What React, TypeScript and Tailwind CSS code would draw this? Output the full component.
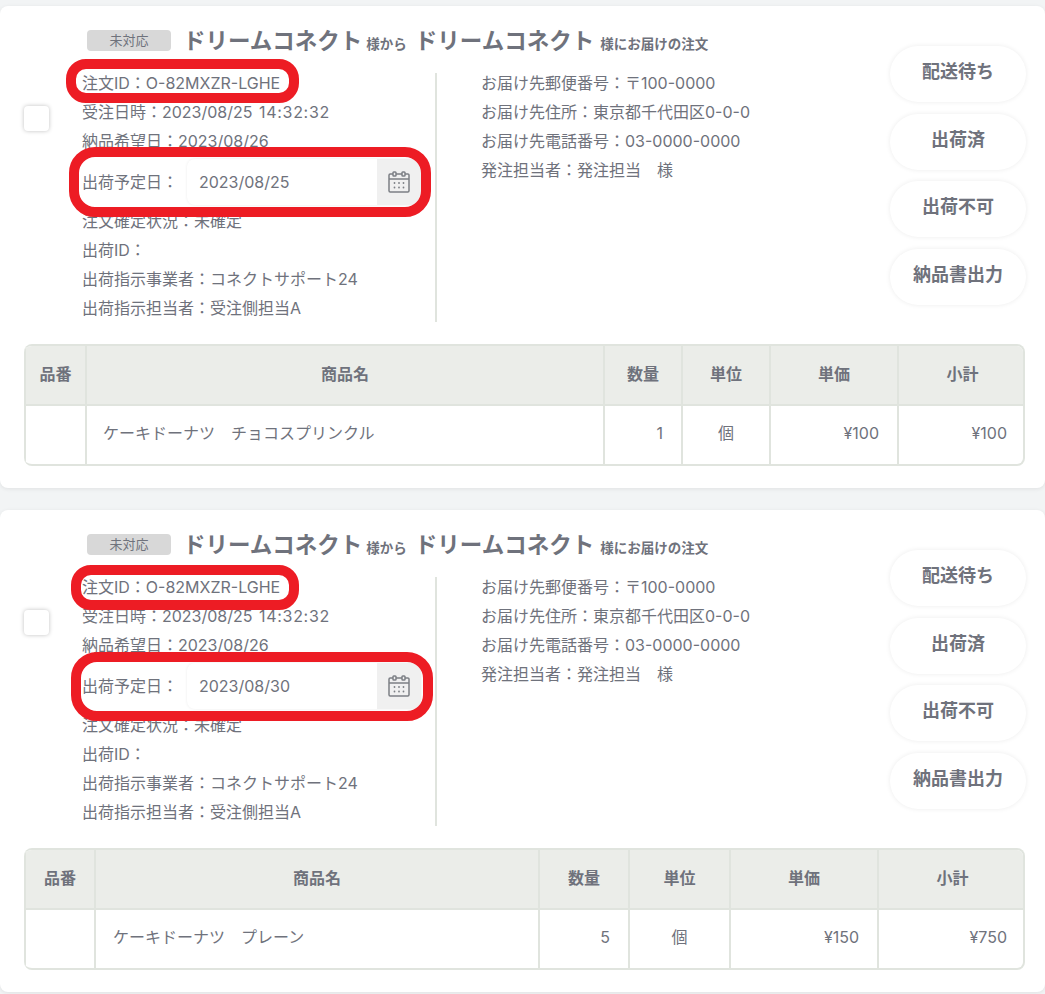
import type { ReactNode } from 'react'

const ink = 'text-[#6f727c]'

function CalendarIcon() {
  return (
    <svg width="24" height="24" viewBox="0 0 24 24" fill="none" stroke="#7c7f85" strokeWidth="1.5">
      <path d="M6 4H3.2C2.5 4 2 4.5 2 5.2v15.6c0 .7.5 1.2 1.2 1.2h17.6c.7 0 1.2-.5 1.2-1.2V5.200c0-.7-.5-1.200-1.200-1.200H18" />
      <path d="M9 4h6" />
      <path d="M2 9h20" />
      <rect x="6" y="2" width="3" height="4" rx="0.8" />
      <rect x="15" y="2" width="3" height="4" rx="0.8" />
      <g fill="#7c7f85" stroke="none">
        <circle cx="7.500" cy="13" r="0.900" />
        <circle cx="12" cy="13" r="0.900" />
        <circle cx="16.500" cy="13" r="0.900" />
        <circle cx="7.500" cy="17.500" r="0.900" />
        <circle cx="12" cy="17.500" r="0.900" />
        <circle cx="16.500" cy="17.500" r="0.900" />
      </g>
    </svg>
  )
}

function Row({ children }: { children: ReactNode }) {
  return <div className="h-[29px] whitespace-nowrap leading-[29px]">{children}</div>
}

const actions = ['配送待ち', '出荷済', '出荷不可', '納品書出力']

interface Order {
  date: string
  product: string
  qty: number
  price: string
  total: string
  cols: string[]
  productPad: string
  idMark: string
  dateMark: string
}

function OrderCard({ order }: { order: Order }) {
  const th = 'border-l-2 border-[#e0e4de] bg-[#ebede9] pb-[3px] text-[16px] font-bold'
  const td = 'border-l-2 border-t-2 border-[#e0e4de] pb-[5px]'
  return (
    <section className={`relative rounded-lg bg-white pt-[21px] pb-[22px] shadow-[0_1px_4px_rgba(0,0,0,0.08)] ${ink}`}>
      <div className="flex">
        <div className="w-[82px] shrink-0 pl-6 pt-[79px]">
          <div className="h-[25px] w-[25px] rounded bg-white shadow-[0_0_4px_rgba(0,0,0,0.25)]" />
        </div>
        <div className="min-w-0 flex-1">
          <div className="mt-px flex h-[25px] items-center whitespace-nowrap pl-[5px] font-bold">
            <span className="mr-3 flex h-[21px] w-[84px] items-center justify-center rounded-sm bg-[#d8d8d8] text-[13px] font-normal">
              未対応
            </span>
            <span className="text-[22.500px]">ドリームコネクト</span>
            <span className="ml-1 mt-[7px] text-[13.500px]">様から</span>
            <span className="ml-2 text-[22.500px]">ドリームコネクト</span>
            <span className="ml-[6px] mt-[7px] text-[13.500px]">様にお届けの注文</span>
          </div>
          <div className="mt-4 flex text-[16px]">
            <div className="w-[353px] shrink-0">
              <Row>注文ID：O-82MXZR-LGHE</Row>
              <Row>
                受注日時：2023/08/25 <span className="ml-0.5 tracking-[0.7px]">14:32:32</span>
              </Row>
              <Row>納品希望日：2023/08/26</Row>
              <div className="flex h-[51px] items-center">
                <span className="w-[105px] shrink-0">出荷予定日：</span>
                <div className="flex h-[46px] w-[234px] overflow-hidden rounded-lg bg-white shadow-[0_0_3px_rgba(0,0,0,0.08)]">
                  <div className="flex flex-1 items-center pl-3">{order.date}</div>
                  <div className="flex w-[44px] items-center justify-center bg-[#f0f0f0]">
                    <CalendarIcon />
                  </div>
                </div>
              </div>
              <Row>注文確定状況：未確定</Row>
              <Row>出荷ID：</Row>
              <Row>出荷指示事業者：コネクトサポート24</Row>
              <Row>出荷指示担当者：受注側担当A</Row>
            </div>
            <div className="mt-1 h-[249px] border-l-2 border-[#e0e4de] pl-[44px]">
              <div className="-mt-1">
                <Row>お届け先郵便番号：〒100-0000</Row>
                <Row>お届け先住所：東京都千代田区0-0-0</Row>
                <Row>お届け先電話番号：03-0000-0000</Row>
                <Row>発注担当者：発注担当　様</Row>
              </div>
            </div>
          </div>
        </div>
        <div className="mr-[19px] mt-[19px] flex w-[136px] shrink-0 flex-col gap-[11.670px]">
          {actions.map((a) => (
            <div
              key={a}
              className="flex h-[56px] items-center justify-center rounded-[28px] bg-white pb-[5px] text-[18px] font-bold shadow-[0_0_5px_rgba(0,0,0,0.08)]"
            >
              {a}
            </div>
          ))}
        </div>
      </div>
      <div className="mx-6 mr-5 mt-[21px] overflow-hidden rounded-lg border-2 border-l-0 border-[#e0e4de]">
        <table className="w-full table-fixed border-collapse text-[16px]">
          <colgroup>
            {order.cols.map((c, i) => (
              <col key={i} className={c} />
            ))}
          </colgroup>
          <thead>
            <tr className="h-[59px]">
              {['品番', '商品名', '数量', '単位', '単価', '小計'].map((h) => (
                <th key={h} className={th}>
                  {h}
                </th>
              ))}
            </tr>
          </thead>
          <tbody>
            <tr className="h-[59px]">
              <td className={td} />
              <td className={`${td} ${order.productPad}`}>{order.product}</td>
              <td className={`${td} pr-[18px] text-right`}>{order.qty}</td>
              <td className={`${td} text-center`}>個</td>
              <td className={`${td} pr-[18px] text-right`}>{order.price}</td>
              <td className={`${td} pr-[19px] text-right`}>{order.total}</td>
            </tr>
          </tbody>
        </table>
      </div>
      <div className={`pointer-events-none absolute border-[10px] border-[#ed1c24] ${order.idMark}`} />
      <div className={`pointer-events-none absolute border-[10px] border-[#ed1c24] ${order.dateMark}`} />
    </section>
  )
}

const orders: Order[] = [
  {
    date: '2023/08/25',
    product: 'ケーキドーナツ　チョコスプリンクル',
    qty: 1,
    price: '¥100',
    total: '¥100',
    cols: ['w-[61px]', 'w-[518px]', 'w-[78px]', 'w-[88px]', 'w-[128px]', 'w-[128px]'],
    productPad: 'pl-4',
    idMark: 'left-[66px] top-[53px] h-[44px] w-[233px] rounded-[20px]',
    dateMark: 'left-[69px] top-[141px] h-[70px] w-[362px] rounded-[26px]',
  },
  {
    date: '2023/08/30',
    product: 'ケーキドーナツ　プレーン',
    qty: 5,
    price: '¥150',
    total: '¥750',
    cols: ['w-[70px]', 'w-[444px]', 'w-[90px]', 'w-[101px]', 'w-[148px]', 'w-[148px]'],
    productPad: 'pl-[17px]',
    idMark: 'left-[71px] top-[55px] h-[45px] w-[228px] rounded-[20px]',
    dateMark: 'left-[71px] top-[142px] h-[69px] w-[362px] rounded-[26px]',
  },
]

export default function App() {
  return (
    <div className="flex min-h-[994px] flex-col gap-[22px] overflow-hidden bg-[#f2f4f5] pt-[6px] font-['Inter','Noto_Sans_CJK_JP',sans-serif]">
      {orders.map((o) => (
        <OrderCard key={o.date} order={o} />
      ))}
    </div>
  )
}
